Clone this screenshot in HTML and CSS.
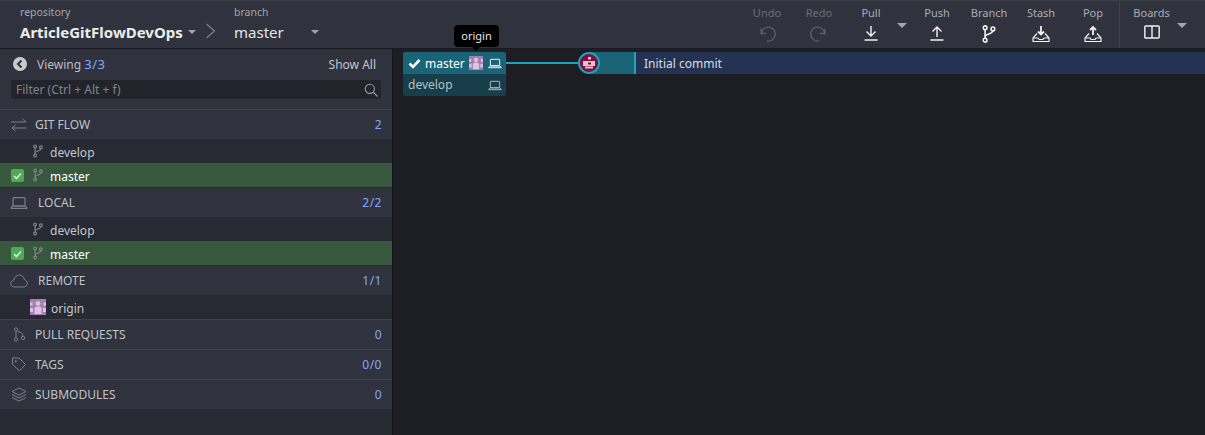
FILE: index.html
```html
<!DOCTYPE html>
<html>
<head>
  <title>ArticleGitFlowDevOps</title>
  <link rel="stylesheet" href="styles.css">
</head>
<body>
<svg class="defs" width="0" height="0">
  <defs>
    <symbol id="branch" viewBox="0 0 12 16">
      <g fill="none" stroke="currentColor" stroke-width="1.400">
        <circle cx="2.500" cy="2.500" r="1.700"/><circle cx="2.500" cy="13.500" r="1.700"/><circle cx="9.500" cy="3.500" r="1.700"/>
        <path d="M2.500 4.200v7.600M9.500 5.200c0 3-7 2.500-7 5.300"/>
      </g>
    </symbol>
    <symbol id="laptop" viewBox="0 0 18 14">
      <g fill="none" stroke="currentColor" stroke-width="1.200">
        <rect x="3" y="1.600" width="12" height="8.400" rx="1"/><path d="M.8 12.400h16.400"/><path d="M.8 12.200l2-2.200h12.400l2 2.200"/>
      </g>
    </symbol>
    <symbol id="people" viewBox="0 0 16 16">
      <rect width="16" height="16" fill="#a47fb0"/>
      <g fill="#dcc3e3">
        <circle cx="8" cy="4.500" r="2.400"/><path d="M4.500 15V9.500c0-1.500 1.500-2 3.500-2s3.500.5 3.500 2V15z"/>
        <rect x="0" y="3.500" width="2.500" height="3"/><rect x="13.500" y="3.500" width="2.500" height="3"/>
        <rect x="0" y="9" width="3" height="4"/><rect x="13" y="9" width="3" height="4"/>
      </g>
    </symbol>
  </defs>
</svg>

<header class="topbar">
  <div class="crumb repo-crumb">
    <span class="crumb-label">repository</span>
    <span class="crumb-value repo-name">ArticleGitFlowDevOps<i class="caret"></i></span>
  </div>
  <svg class="chevron" width="12" height="18" viewBox="0 0 12 18"><path d="M1.500 2l8 7-8 7" fill="none" stroke="#7d818b" stroke-width="1.200"/></svg>
  <div class="crumb branch-crumb">
    <span class="crumb-label">branch</span>
    <span class="crumb-value">master<i class="caret branch-caret"></i></span>
  </div>

  <div class="toolbar">
    <div class="tool tool-off"><span>Undo</span>
      <svg width="18" height="18" viewBox="0 0 18 18"><path d="M3 3.500v5h5M3.300 8.500A7 7 0 1 1 9 16" fill="none" stroke="currentColor" stroke-width="1.300"/></svg>
    </div>
    <div class="tool tool-off"><span>Redo</span>
      <svg width="18" height="18" viewBox="0 0 18 18"><path d="M15 3.500v5h-5M14.700 8.500A7 7 0 1 0 9 16" fill="none" stroke="currentColor" stroke-width="1.300"/></svg>
    </div>
    <div class="tool"><span>Pull</span>
      <svg width="14" height="16" viewBox="0 0 14 16"><path d="M7 1v10M2.500 6.500L7 11l4.500-4.500M.5 15h13" fill="none" stroke="currentColor" stroke-width="1.400"/></svg>
    </div>
    <i class="caret tool-caret pull-caret"></i>
    <div class="tool"><span>Push</span>
      <svg width="14" height="16" viewBox="0 0 14 16"><path d="M7 12V2M2.500 6.500L7 2l4.500 4.500M.5 15h13" fill="none" stroke="currentColor" stroke-width="1.400"/></svg>
    </div>
    <div class="tool"><span>Branch</span>
      <svg width="14" height="18" viewBox="0 0 12 16"><use href="#branch"/></svg>
    </div>
    <div class="tool"><span>Stash</span>
      <svg width="18" height="18" viewBox="0 0 18 18"><path d="M9 1v8M6 6.500L9 9.500l3-3" fill="none" stroke="currentColor" stroke-width="1.800"/><path d="M5 8.500L1 13v3.500h16V13l-4-4.500M1 13h5l1 1.500h4l1-1.500h5" fill="none" stroke="currentColor" stroke-width="1.200"/></svg>
    </div>
    <div class="tool"><span>Pop</span>
      <svg width="18" height="18" viewBox="0 0 18 18"><path d="M9 10V2M6 5l3-3 3 3" fill="none" stroke="currentColor" stroke-width="1.800"/><path d="M5 8.500L1 13v3.500h16V13l-4-4.500M1 13h5l1 1.500h4l1-1.500h5" fill="none" stroke="currentColor" stroke-width="1.200"/></svg>
    </div>
    <div class="tool tool-boards"><span>Boards</span>
      <svg width="16" height="14" viewBox="0 0 16 14"><rect x=".8" y="1" width="14.400" height="12" rx="1" fill="none" stroke="currentColor" stroke-width="1.400"/><path d="M8 1v12" stroke="currentColor" stroke-width="1.400"/></svg>
    </div>
    <i class="caret tool-caret boards-caret"></i>
  </div>
</header>

<div class="main">
  <aside class="sidebar">
    <div class="viewing">
      <div class="viewing-row">
        <svg width="14" height="14" viewBox="0 0 14 14"><circle cx="7" cy="7" r="7" fill="#c9cbd0"/><path d="M8.500 3.500L5 7l3.500 3.500" fill="none" stroke="#2f323c" stroke-width="2"/></svg>
        <span class="viewing-text">Viewing <b class="count">3/3</b></span>
        <span class="show-all">Show All</span>
      </div>
      <div class="filter">
        <span>Filter (Ctrl + Alt + f)</span>
        <svg width="14" height="14" viewBox="0 0 14 14"><circle cx="5.800" cy="5.800" r="4.600" fill="none" stroke="#9a9da5" stroke-width="1.100"/><path d="M9.200 9.200L13.500 13.500" stroke="#9a9da5" stroke-width="1.100"/></svg>
      </div>
    </div>

    <div class="section section-line">
      <svg class="section-icon" width="16" height="14" viewBox="0 0 16 14"><path d="M0 4h15M11.500 .8L15 4M15.500 10H1M4.500 6.800L1 10l3.500 3.200" fill="none" stroke="#7c8089" stroke-width="1"/></svg>
      <span class="section-name">GIT FLOW</span><b class="count">2</b>
    </div>
    <div class="branch-row"><svg class="branch-icon" width="10" height="14"><use href="#branch"/></svg><span>develop</span></div>
    <div class="branch-row active">
      <i class="check"><svg width="9" height="8" viewBox="0 0 9 8"><path d="M1 4l2.500 2.500L8 1.500" fill="none" stroke="#d5efd5" stroke-width="1.600"/></svg></i>
      <svg class="branch-icon" width="10" height="14"><use href="#branch"/></svg><span>master</span>
    </div>

    <div class="section">
      <svg class="section-icon" width="18" height="14"><use href="#laptop"/></svg>
      <span class="section-name wide-name">LOCAL</span><b class="count">2/2</b>
    </div>
    <div class="branch-row"><svg class="branch-icon" width="10" height="14"><use href="#branch"/></svg><span>develop</span></div>
    <div class="branch-row active">
      <i class="check"><svg width="9" height="8" viewBox="0 0 9 8"><path d="M1 4l2.500 2.500L8 1.500" fill="none" stroke="#d5efd5" stroke-width="1.600"/></svg></i>
      <svg class="branch-icon" width="10" height="14"><use href="#branch"/></svg><span>master</span>
    </div>

    <div class="section">
      <svg class="section-icon" width="18" height="14" viewBox="0 0 18 14"><path d="M4.500 13C2 13 .7 11.200.7 9.500c0-2 1.600-3.300 3.100-3.400C4.500 3 6.700 1 9.300 1c2.800 0 4.700 2 5 4.600 1.700.3 3 1.800 3 3.700 0 2-1.500 3.700-3.800 3.700z" fill="none" stroke="#7c8089" stroke-width="1"/></svg>
      <span class="section-name wide-name">REMOTE</span><b class="count">1/1</b>
    </div>
    <div class="branch-row origin-row"><svg class="avatar" width="16" height="16"><use href="#people"/></svg><span>origin</span></div>

    <div class="section section-line">
      <svg class="section-icon" width="14" height="15" viewBox="0 0 14 15"><g fill="none" stroke="#7c8089" stroke-width="1"><circle cx="4" cy="2.500" r="1.700"/><circle cx="4" cy="12.500" r="1.700"/><circle cx="11" cy="11" r="1.700"/><path d="M4 4.200v6.600M5.500 4.500C9 5 11 6.500 11 9.300"/></g></svg>
      <span class="section-name">PULL REQUESTS</span><b class="count">0</b>
    </div>
    <div class="section section-line">
      <svg class="section-icon" width="15" height="15" viewBox="0 0 15 15"><path d="M1 1h6.500L14 7.500 8 13.800 1 7.500z" fill="none" stroke="#7c8089" stroke-width="1"/><circle cx="4.300" cy="4.300" r="1" fill="#7c8089"/></svg>
      <span class="section-name">TAGS</span><b class="count">0/0</b>
    </div>
    <div class="section section-line">
      <svg class="section-icon" width="15" height="15" viewBox="0 0 15 15"><g fill="none" stroke="#7c8089" stroke-width="1"><path d="M7.500 1L14.500 4.500 7.500 8 .5 4.500z"/><path d="M.5 7.500l7 3.500 7-3.500M.5 10.500l7 3.500 7-3.500"/></g></svg>
      <span class="section-name">SUBMODULES</span><b class="count">0</b>
    </div>
  </aside>

  <section class="graph">
    <div class="commit-row">
      <div class="refs">
        <div class="ref ref-master">
          <svg class="ref-check" width="13" height="11" viewBox="0 0 13 11"><path d="M1.500 5.500L5 9l6.500-7" fill="none" stroke="#fff" stroke-width="2.600"/></svg>
          <span class="ref-name">master</span>
          <svg class="ref-avatar" width="14" height="14"><use href="#people"/></svg>
          <svg class="ref-laptop" width="14" height="11"><use href="#laptop"/></svg>
          <div class="tooltip">origin</div>
        </div>
        <div class="ref ref-develop">
          <span class="ref-name">develop</span>
          <svg class="ref-laptop" width="14" height="11"><use href="#laptop"/></svg>
        </div>
      </div>
      <div class="graph-line"></div>
      <div class="node-strip">
        <svg class="node" width="22" height="22" viewBox="0 0 22 22">
          <circle cx="11" cy="11" r="10" fill="#7f0f3b" stroke="#19a3c0" stroke-width="2"/>
          <rect x="10" y="5" width="3" height="2.500" fill="#e4c4d0"/>
          <rect x="5" y="9" width="12" height="5" fill="#e4c4d0"/>
          <rect x="10" y="10.500" width="3" height="2" fill="#7f0f3b"/>
          <rect x="7" y="14.500" width="8" height="2" fill="#e4c4d0"/>
        </svg>
      </div>
      <div class="commit-msg">Initial commit</div>
    </div>
  </section>
</div>
</body>
</html>
```

FILE: styles.css
```css
* {
  box-sizing: border-box;
}

html, body {
  height: 100%;
}

body {
  margin: 0;
  overflow: hidden;
  background-color: #1c1e23;
  color: #d5d7dc;
  font-family: "Noto Sans", Arial, sans-serif;
  font-size: 12px;
}

.defs {
  display: block;
  height: 0;
}

svg {
  flex: none;
}

/* top bar */
.topbar {
  display: flex;
  height: 49px;
  padding-left: 20px;
  background-color: #30333d;
  border-top: 1px solid #3b3e48;
  border-bottom: 1px solid #1a1b20;
}

.crumb {
  display: flex;
  flex-direction: column;
  padding-top: 4px;
}

.crumb-label {
  height: 15px;
  color: #a2a5ad;
  font-size: 10.500px;
  line-height: 15px;
}

.crumb-value {
  display: flex;
  align-items: center;
  height: 24px;
  color: #e4e5e8;
  font-size: 15px;
  line-height: 24px;
}

.repo-name {
  font-weight: 700;
  color: #eceded;
}

.repo-crumb {
  width: 185px;
}

.chevron {
  margin-top: 21px;
}

.branch-crumb {
  margin-left: 17px;
}

.caret {
  display: inline-block;
  width: 0;
  height: 0;
  border-left: 4px solid transparent;
  border-right: 4px solid transparent;
  border-top: 4px solid #a2a5ad;
}

.repo-name .caret {
  margin-left: 5px;
}

.branch-caret {
  margin-left: 27px;
}

.toolbar {
  display: flex;
  margin-left: auto;
  height: 47px;
}

.tool {
  display: flex;
  flex-direction: column;
  align-items: center;
  width: 52px;
  padding-top: 4px;
  color: #f0f1f3;
}

.tool span {
  height: 16px;
  margin-bottom: 4px;
  color: #a8abb2;
  font-size: 11px;
  line-height: 16px;
}

.tool-off {
  color: #5d6069;
}

.tool-off span {
  color: #696c75;
}

.tool-caret {
  margin-top: 22px;
  border-left-width: 5px;
  border-right-width: 5px;
  border-top-width: 5px;
}

.pull-caret {
  margin-right: 4px;
}

.boards-caret {
  margin-right: 18px;
}

.tool-boards {
  width: 58px;
  padding-left: 6px;
  border-left: 1px solid #3d404a;
}

/* sidebar */
.main {
  display: flex;
  height: calc(100% - 49px);
}

.sidebar {
  width: 392px;
  flex: none;
  background-color: #272a32;
}

.viewing {
  height: 60px;
  padding: 4px 11px 0;
  background-color: #30333d;
}

.viewing-row {
  display: flex;
  align-items: center;
  height: 22px;
  padding: 0 5px 0 2px;
}

.viewing-text {
  margin-left: 10px;
  color: #b9bcc2;
  font-size: 12px;
}

.viewing-text .count {
  font-size: 13px;
}

.show-all {
  margin-left: auto;
  color: #c2c4ca;
  font-size: 12px;
}

.count {
  color: #84a5ff;
  font-size: 12px;
  font-weight: 400;
  letter-spacing: .5px;
}

.filter {
  display: flex;
  align-items: center;
  justify-content: space-between;
  height: 19px;
  margin-top: 5px;
  padding: 0 3px 0 5px;
  background-color: #22242b;
  border-radius: 2px;
  color: #80838c;
  font-size: 12px;
}

.section {
  display: flex;
  align-items: center;
  height: 30px;
  padding: 0 10px;
  background-color: #30333d;
  border-top: 1px solid #2a2c35;
  color: #bfc2c8;
  font-size: 12px;
}

.section-line {
  border-top-color: #3f424c;
}

.section-icon {
  width: 18px;
  color: #7c8089;
}

.section-name {
  margin-left: 7px;
}

.wide-name {
  margin-left: 10px;
}

.section .count {
  margin-left: auto;
}

.branch-row {
  display: flex;
  align-items: center;
  height: 24px;
  padding-left: 33px;
  background-color: #272a32;
  color: #c3c5cb;
}

.branch-icon {
  color: #80848c;
}

.branch-row span {
  margin-left: 7px;
  padding-top: 2px;
}

.active {
  position: relative;
  background-color: #38583d;
  color: #fff;
}

.check {
  position: absolute;
  left: 11px;
  top: 6px;
  display: flex;
  align-items: center;
  justify-content: center;
  width: 13px;
  height: 13px;
  background-color: #4eab53;
  border-radius: 2px;
}

.origin-row {
  padding-left: 30px;
}

.origin-row span {
  margin-left: 5px;
}

/* graph */
.graph {
  flex: 1;
  padding-top: 3px;
  background-color: #1c1e23;
  border-left: 1px solid #15161a;
}

.commit-row {
  display: flex;
  height: 22px;
  padding-left: 10px;
}

.refs {
  width: 103px;
  flex: none;
}

.ref {
  position: relative;
  display: flex;
  align-items: center;
  height: 22px;
  padding: 0 4px 0 5px;
  color: #fff;
  font-size: 12px;
}

.ref-master {
  background-color: #1b6377;
  border-radius: 2px 2px 0 0;
}

.ref-develop {
  background-color: #173e4a;
  border-radius: 0 0 2px 2px;
  color: #b4c0c4;
}

.ref-develop .ref-name {
  padding-bottom: 2px;
}

.ref-check {
  margin-right: 4px;
}

.ref-avatar {
  margin-left: 4px;
}

.ref-laptop {
  margin-left: auto;
  color: #fff;
}

.ref-develop .ref-laptop {
  color: #b4c0c4;
}

.tooltip {
  position: absolute;
  top: -27px;
  left: 51px;
  width: 45px;
  height: 22px;
  background-color: #000;
  border-radius: 4px;
  color: #e4e4e4;
  font-size: 11px;
  line-height: 22px;
  text-align: center;
}

.tooltip::after {
  content: "";
  position: absolute;
  left: 18px;
  top: 22px;
  border-left: 4px solid transparent;
  border-right: 4px solid transparent;
  border-top: 4px solid #000;
}

.graph-line {
  width: 72px;
  height: 2px;
  margin-top: 10px;
  background-color: #19a3c0;
}

.node-strip {
  display: flex;
  align-items: center;
  width: 58px;
  background: linear-gradient(to right, transparent 11px, #1b6377 11px);
  border-right: 2px solid #19a3c0;
}

.commit-msg {
  flex: 1;
  padding: 1px 0 0 8px;
  background-color: #243354;
  color: #d8dbe2;
  font-size: 12px;
  line-height: 22px;
}
```
